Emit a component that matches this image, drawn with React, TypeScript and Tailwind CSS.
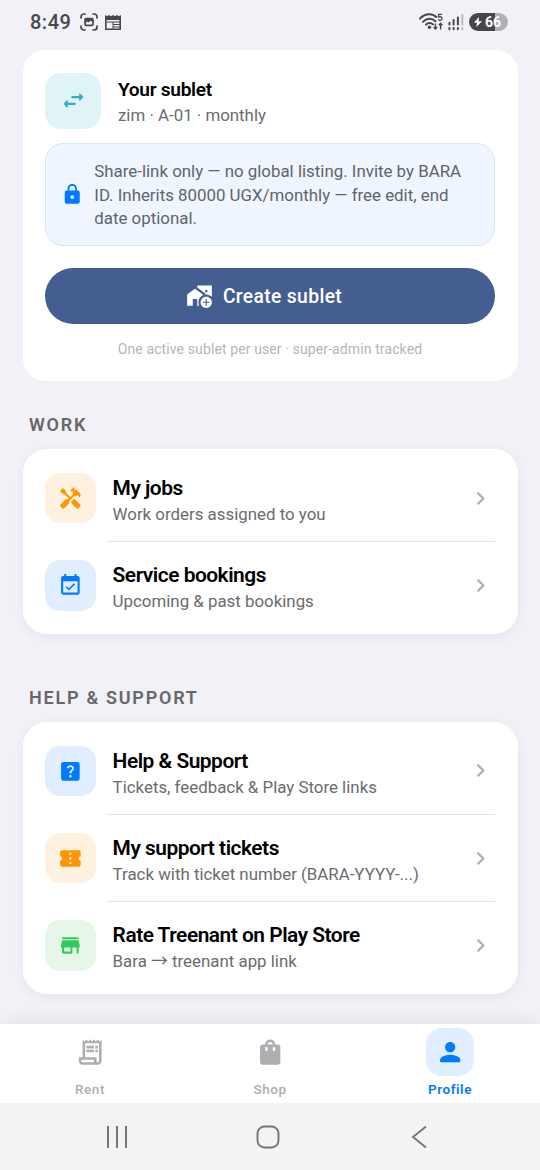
import React from 'react';
import {
  MdAddHomeWork,
  MdConfirmationNumber,
  MdEventAvailable,
  MdHandyman,
  MdHelpCenter,
  MdLock,
  MdOutlineReceiptLong,
  MdShoppingBag,
} from 'react-icons/md';

interface RowProps {
  icon: React.ReactNode;
  tile: string;
  title: string;
  subtitle: string;
}

function RoundedIcon({ d, className }: { d: string; className: string }): React.ReactElement {
  return (
    <svg viewBox="0 0 24 24" fill="currentColor" className={className}>
      <path d={d} />
    </svg>
  );
}

const SWAP =
  'M6.14 11.86l-2.78 2.79c-.19.2-.19.51 0 .71l2.78 2.79c.31.32.85.09.85-.35V16H13c.55 0 1-.45 1-1s-.45-1-1-1H6.99v-1.79c0-.45-.54-.67-.85-.35zm14.51-3.21l-2.78-2.79c-.31-.32-.85-.09-.85.35V8H11c-.55 0-1 .45-1 1s.45 1 1 1h6.01v1.79c0 .45.54.67.85.35l2.78-2.79c.2-.19.2-.51.01-.7z';
const STORE =
  'M5 6h14c.55 0 1-.45 1-1s-.45-1-1-1H5c-.55 0-1 .45-1 1s.45 1 1 1zm15.16 1.8c-.09-.46-.5-.8-.98-.8H4.82c-.48 0-.89.34-.98.8l-1 5c-.12.62.35 1.2.98 1.2H4v5c0 .55.45 1 1 1h8c.55 0 1-.45 1-1v-5h4v5c0 .55.45 1 1 1s1-.45 1-1v-5h.18c.63 0 1.1-.58.98-1.2l-1-5zM12 18H6v-4h6v4z';
const CHEVRON =
  'M9.29 6.71c-.39.39-.39 1.02 0 1.41L13.17 12l-3.88 3.88c-.39.39-.39 1.02 0 1.41.39.39 1.02.39 1.41 0l4.59-4.59c.39-.39.39-1.02 0-1.41L10.7 6.7c-.38-.38-1.02-.38-1.41.01z';
const PERSON =
  'M12 12c2.21 0 4-1.79 4-4s-1.79-4-4-4-4 1.79-4 4 1.79 4 4 4zm0 2c-2.67 0-8 1.34-8 4v1c0 .55.45 1 1 1h14c.55 0 1-.45 1-1v-1c0-2.66-5.33-4-8-4z';

function StatusBar(): React.ReactElement {
  return (
    <header className="flex h-[50px] shrink-0 items-center justify-between pb-[6px] pl-[30px] pr-8 text-[#47464b]">
      <div className="flex items-center">
        <span className="w-[50px] text-[20px] font-medium leading-6 tracking-[0.5px]">8:49</span>
        <svg viewBox="0 0 18 18" className="h-[18px] w-[18px]" fill="none" stroke="currentColor" strokeWidth="1.7" strokeLinecap="round">
          <path d="M1 5V4a3 3 0 0 1 3-3h1M13 1h1a3 3 0 0 1 3 3v1M17 13v1a3 3 0 0 1-3 3h-1M5 17H4a3 3 0 0 1-3-3v-1" />
          <rect x="5" y="5.6" width="8" height="6.8" rx="1.2" />
          <path d="M5.5 6h7v3l-2-1.2-2 1.8-1-1-2 1.6z" fill="currentColor" stroke="none" />
        </svg>
        <svg viewBox="0 0 16 15" className="ml-[6.5px] h-[15px] w-4" fill="none" stroke="currentColor">
          <path d="M.8 2v12.2h14.4V2" strokeWidth="1.6" />
          <path d="M0 0l2 1.2L4 0l2 1.2L8 0l2 1.2L12 0l2 1.2L16 0v5H0z" fill="currentColor" stroke="none" />
          <path d="M1 7h14M8 7v7M8 9.5h7M8 12h7" strokeWidth="1" />
        </svg>
      </div>
      <div className="flex items-center">
        <svg viewBox="0 0 25 18" className="h-[18px] w-[25px]" fill="none" stroke="currentColor">
          <path d="M1 5.6C5.5.4 13-.2 17.2 4M4 8.8c3.6-4 9-4.2 12.4-.6M7 11.6c2-2.2 5-2.3 7-.2" strokeWidth="2" strokeLinecap="round" />
          <circle cx="10.4" cy="14.2" r="1.7" fill="currentColor" stroke="none" />
          <path d="M16.4 10.5v5.2M14.6 14l1.8 2 1.8-2M21.6 16.5v-5.8M19.8 12.3l1.8-2 1.8 2" strokeWidth="1.4" />
          <path d="M23 1.3h-3.3L19.4 4c1.9-.6 3.6 0 3.6 1.6 0 1.8-2.3 2.3-3.8 1" strokeWidth="1.3" />
        </svg>
        <svg viewBox="0 0 16 17" className="ml-1 h-[17px] w-4" fill="none" stroke="currentColor" strokeWidth="2" strokeLinecap="round">
          <path d="M1.4 8.8v1.8M5.6 6v4.6M9.9 3.6v7" />
          <path d="M14.3 1v9.6" stroke="#bab9be" />
          <path d="M1.4 14v1.2M5.6 14v1.2M9.9 14v1.2" />
          <path d="M14.3 14v1.2" stroke="#bab9be" />
        </svg>
        <div className="ml-[5px] flex h-[18px] w-[39px] items-center rounded-full bg-[linear-gradient(90deg,#47464b_66%,#b0afb4_66%)] pl-[5px] text-white">
          <svg viewBox="0 0 8 10" className="h-[10px] w-2" fill="currentColor">
            <path d="M4.8 0 0 5.7h3L2.4 10 8 4.2H4.8z" />
          </svg>
          <span className="ml-[3px] text-[14px] font-bold leading-[18px]">66</span>
        </div>
      </div>
    </header>
  );
}

function Row({ icon, tile, title, subtitle }: RowProps): React.ReactElement {
  return (
    <div className="flex h-[50.6px] items-center">
      <div className={`flex h-[50.6px] w-[50.6px] shrink-0 items-center justify-center rounded-[15px] text-[24.75px] ${tile}`}>
        {icon}
      </div>
      <div className="ml-[17px] flex-1 pt-[6.6px]">
        <div className="text-[20.9px] font-semibold leading-[26px] tracking-[-0.48px] text-black">{title}</div>
        <div className="text-[16.875px] leading-[27px] text-[#6b6b6e]">{subtitle}</div>
      </div>
      <RoundedIcon d={CHEVRON} className="mr-[0.8px] h-[27px] w-[27px] text-[#b0b0b4]" />
    </div>
  );
}

function Divider(): React.ReactElement {
  return <div className="mb-[17.75px] ml-[62px] mt-[17.75px] h-[1.1px] bg-[#e4e4e7]" />;
}

function SectionCard({ rows }: { rows: RowProps[] }): React.ReactElement {
  return (
    <section className="mx-[22.5px] rounded-[24px] bg-white px-[22.5px] py-[23.3px] shadow-[0_3px_14px_rgba(0,0,0,0.06)]">
      {rows.map((row, index) => (
        <React.Fragment key={row.title}>
          {index > 0 && <Divider />}
          <Row {...row} />
        </React.Fragment>
      ))}
    </section>
  );
}

function SectionLabel({ children }: { children: string }): React.ReactElement {
  return (
    <h2 className="pl-[29px] text-[18px] font-semibold leading-6 tracking-[1.75px] text-[#67676b]">
      {children}
    </h2>
  );
}

function SubletCard(): React.ReactElement {
  return (
    <section className="mx-[22.5px] h-[331px] shrink-0 rounded-[22px] bg-white px-[22.5px] pt-[22.5px]">
      <div className="flex">
        <div className="flex h-[56px] w-[56px] items-center justify-center rounded-[16px] bg-[#e0f3f7] text-[#30b0c7]">
          <RoundedIcon d={SWAP} className="h-[27px] w-[27px]" />
        </div>
        <div className="ml-[17px] h-[56px] pt-1">
          <div className="text-[19.125px] font-semibold leading-[26px] tracking-[-0.3px] text-black">Your sublet</div>
          <div className="text-[16.875px] leading-[25px] text-[#6b6b6e]">zim · A-01 · monthly</div>
        </div>
      </div>
      <div className="mt-[14px] flex h-[103px] items-center rounded-[18px] border border-[#d5e6fa] bg-[#eff6ff] pl-[14.5px]">
        <MdLock className="h-[22.5px] w-[22.5px] shrink-0 text-[#007aff]" />
        <p className="ml-[11.3px] w-[380px] pt-[3px] text-[16.875px] leading-[23.9px] text-[#5f646b]">
          Share-link only — no global listing. Invite by BARA ID. Inherits 80000 UGX/monthly — free edit, end date
          optional.
        </p>
      </div>
      <button className="mt-[22.3px] flex h-[56.3px] w-full items-center justify-center rounded-full bg-[#445e91] pr-[12px] text-[19.3px] font-medium tracking-[0.35px] text-white">
        <MdAddHomeWork className="mr-[10px] h-[27px] w-[27px]" />
        <span className="pt-[4px]">Create sublet</span>
      </button>
      <p className="mt-[15px] text-center text-[14.06px] leading-5 tracking-[0.09px] text-[#b5b5b8]">
        One active sublet per user · super-admin tracked
      </p>
    </section>
  );
}

const workRows: RowProps[] = [
  {
    icon: <MdHandyman />,
    tile: 'bg-[#fff1e0] text-[#ff9500]',
    title: 'My jobs',
    subtitle: 'Work orders assigned to you',
  },
  {
    icon: <MdEventAvailable />,
    tile: 'bg-[#e0eeff] text-[#007aff]',
    title: 'Service bookings',
    subtitle: 'Upcoming & past bookings',
  },
];

const supportRows: RowProps[] = [
  {
    icon: <MdHelpCenter />,
    tile: 'bg-[#e0eeff] text-[#007aff]',
    title: 'Help & Support',
    subtitle: 'Tickets, feedback & Play Store links',
  },
  {
    icon: <MdConfirmationNumber />,
    tile: 'bg-[#fff1e0] text-[#ff9500]',
    title: 'My support tickets',
    subtitle: 'Track with ticket number (BARA-YYYY-...)',
  },
  {
    icon: <RoundedIcon d={STORE} className="h-[24.75px] w-[24.75px]" />,
    tile: 'bg-[#e6f7ea] text-[#34c759]',
    title: 'Rate Treenant on Play Store',
    subtitle: 'Bara → treenant app link',
  },
];

function TabBar(): React.ReactElement {
  return (
    <nav className="grid h-[79px] shrink-0 grid-cols-3 bg-white pt-[4px] text-[13.5px] font-medium leading-5 tracking-[0.55px] text-[#adadb2] shadow-[0_-4px_18px_rgba(0,0,0,0.06)]">
      <div className="flex flex-col items-center">
        <div className="flex h-[48px] items-center">
          <MdOutlineReceiptLong className="h-[30.4px] w-[30.4px]" />
        </div>
        <span className="mt-[3px]">Rent</span>
      </div>
      <div className="flex flex-col items-center">
        <div className="flex h-[48px] items-center">
          <MdShoppingBag className="h-[30.4px] w-[30.4px]" />
        </div>
        <span className="mt-[3px]">Shop</span>
      </div>
      <div className="flex flex-col items-center text-[#007aff]">
        <div className="flex h-[48px] w-[48px] items-center justify-center rounded-[16px] bg-[#e0eeff]">
          <RoundedIcon d={PERSON} className="h-[30.4px] w-[30.4px]" />
        </div>
        <span className="mt-[3px] font-semibold">Profile</span>
      </div>
    </nav>
  );
}

function SystemBar(): React.ReactElement {
  return (
    <footer className="flex h-[67px] shrink-0 items-center bg-[#f3f3f3] pl-[106px] text-[#767676]">
      <svg viewBox="0 0 22 22" className="h-[22px] w-[22px]" stroke="currentColor" strokeWidth="2">
        <path d="M2 0v22M11 0v22M20 0v22" />
      </svg>
      <svg viewBox="0 0 24 24" className="ml-[128px] h-6 w-6" fill="none" stroke="currentColor" strokeWidth="1.9">
        <rect x="1.5" y="1.5" width="21" height="21" rx="7" />
      </svg>
      <svg viewBox="0 0 16 24" className="ml-[131px] h-6 w-4" fill="none" stroke="currentColor" strokeWidth="1.9">
        <path d="M15 1.5 2 12l13 10.5" />
      </svg>
    </footer>
  );
}

export default function App(): React.ReactElement {
  return (
    <div className="flex h-[1170px] w-[540px] flex-col overflow-hidden bg-[#f2f1f7] font-[Roboto,'Noto_Sans_CJK_JP',sans-serif]">
      <StatusBar />
      <main className="flex min-h-0 flex-1 flex-col">
        <SubletCard />
        <div className="mb-[12.3px] mt-[32.2px]">
          <SectionLabel>WORK</SectionLabel>
        </div>
        <SectionCard rows={workRows} />
        <div className="mb-[12.5px] mt-[52px]">
          <SectionLabel>{'HELP & SUPPORT'}</SectionLabel>
        </div>
        <SectionCard rows={supportRows} />
      </main>
      <TabBar />
      <SystemBar />
    </div>
  );
}
